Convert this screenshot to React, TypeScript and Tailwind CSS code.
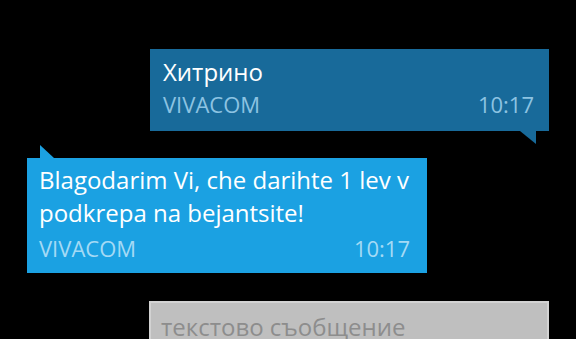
import React from 'react';

const font = { fontFamily: '"Open Sans", "Noto Sans", sans-serif' };

export default function App() {
  return (
    <div className="w-[576px] h-[339px] overflow-hidden bg-black" style={font}>
      <div className="flex flex-col pt-[49px]">
        {/* исходящее сообщение */}
        <div className="ml-[150px] w-[399px] h-[82px] bg-[#186a9a] pl-[13px] pr-[15px] pt-[7px] flex flex-col">
          <p className="text-[24px] leading-[32px] text-white">Хитрино</p>
          <div className="flex justify-between text-[22px] leading-[32px] text-[#8cc3e2]">
            <span>VIVACOM</span>
            <span>10:17</span>
          </div>
        </div>
        <svg className="ml-[520px]" width="17" height="13" viewBox="0 0 17 13">
          <polygon points="0,0 16,0 16,13" fill="#186a9a" />
        </svg>

        {/* входящее сообщение */}
        <svg className="ml-[40px] mt-[1px]" width="14" height="13" viewBox="0 0 14 13">
          <polygon points="0,0 0,13 14,13" fill="#1ba1e2" />
        </svg>
        <div className="ml-[27px] w-[400px] h-[115px] bg-[#1ba1e2] pl-[12px] pr-[17px] pt-[5px] flex flex-col">
          <p className="text-[24px] leading-[33px] text-white">
            Blagodarim Vi, che darihte 1 lev v podkrepa na bejantsite!
          </p>
          <div className="flex justify-between text-[22px] leading-[32px] text-[#a4daf5] mt-[3px]">
            <span>VIVACOM</span>
            <span>10:17</span>
          </div>
        </div>

        {/* поле ввода */}
        <div className="ml-[149px] mt-[28px] w-[400px] h-[60px] bg-[#bfbfbf] border-[2px] border-[#d2d2d2] pl-[10px] pt-[8px]">
          <span className="text-[24px] leading-[32px] text-[#8d8d8d]">текстово съобщение</span>
        </div>
      </div>
    </div>
  );
}
